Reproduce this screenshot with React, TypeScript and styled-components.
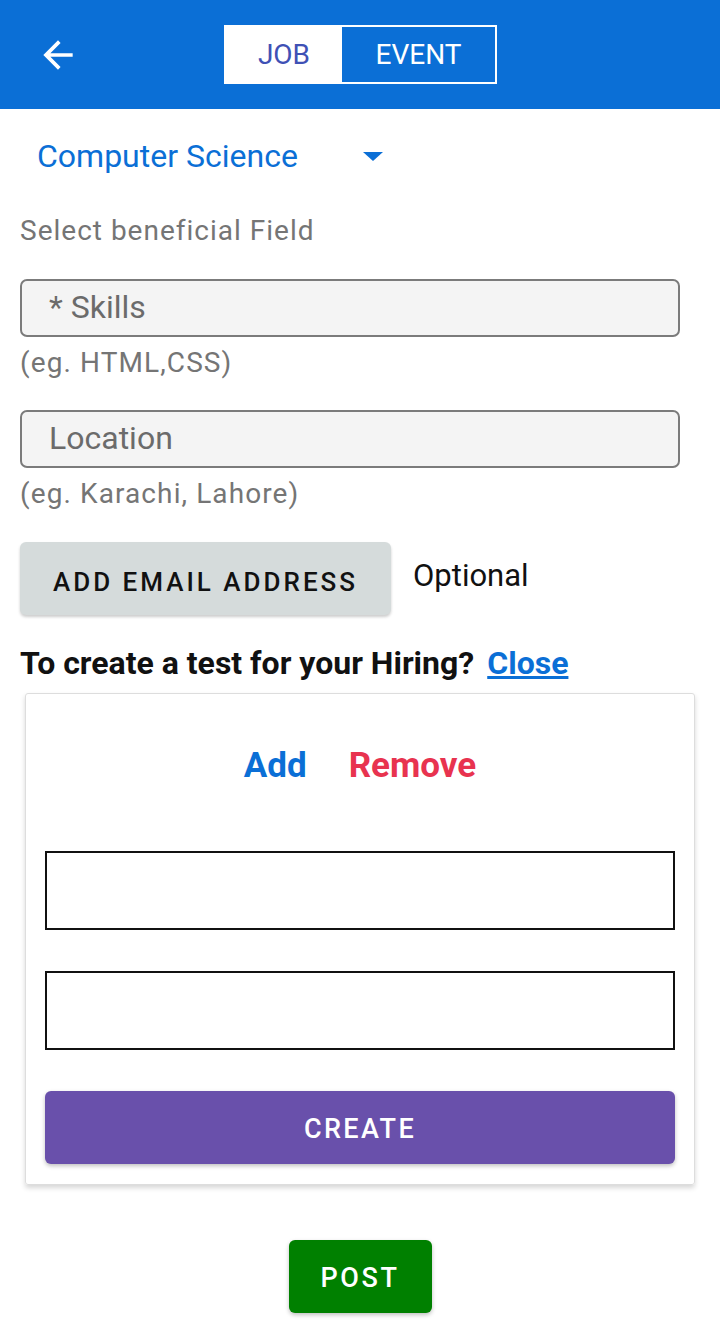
import React from "react";
import styled, { createGlobalStyle } from "styled-components";

const GlobalStyle = createGlobalStyle`
    body {
        margin: 0;
        background: #ffffff;
        font-family: Roboto, "Noto Sans", sans-serif;
    }
`;

const Page = styled.div`
    width: 720px;
    min-height: 1331px;
    background: #ffffff;
`;

const Header = styled.header`
    height: 109px;
    background: #0b6fd6;
    display: flex;
    align-items: center;
`;

const BackButton = styled.button`
    width: 80px;
    height: 109px;
    padding: 0 0 0 36px;
    border: none;
    background: none;
    display: flex;
    align-items: center;
    cursor: pointer;
`;

const Toggle = styled.div`
    display: flex;
    margin-left: 144px;
    height: 59px;
    box-sizing: border-box;
    border: 2px solid #ffffff;
`;

const ToggleItem = styled.div<{ $active?: boolean; $width: number }>`
    width: ${p => p.$width}px;
    display: flex;
    align-items: center;
    justify-content: center;
    font-size: 28px;
    background: ${p => (p.$active ? "#ffffff" : "transparent")};
    color: ${p => (p.$active ? "#3f51b5" : "#ffffff")};
`;

const Body = styled.main`
    padding: 0 20px;
    display: flex;
    flex-direction: column;
`;

const Picker = styled.div`
    display: flex;
    align-items: center;
    height: 94px;
    padding-left: 17px;
    color: #0b6fd6;
    font-size: 32px;
`;

const Caret = styled.span`
    margin-left: 65px;
    width: 0;
    height: 0;
    border-left: 10px solid transparent;
    border-right: 10px solid transparent;
    border-top: 9px solid #0b6fd6;
`;

const Label = styled.div`
    color: #757575;
    font-size: 28px;
    line-height: 34px;
    letter-spacing: 1px;
    margin-top: 11px;
    margin-bottom: 31px;
`;

const Field = styled.div`
    width: 660px;
    height: 58px;
    box-sizing: border-box;
    border: 2px solid #7b7b7b;
    border-radius: 7px;
    background: #f4f4f4;
    display: flex;
    align-items: center;
    padding: 0 0 3px 27px;
    font-size: 32px;
    color: #6b6b6b;
`;

const Hint = styled.div<{ $gap: number }>`
    color: #757575;
    font-size: 28px;
    line-height: 34px;
    letter-spacing: 1.1px;
    margin-top: 9px;
    margin-bottom: ${p => p.$gap}px;
`;

const EmailRow = styled.div`
    display: flex;
    align-items: center;
    gap: 22px;
`;

const GreyButton = styled.button`
    width: 371px;
    height: 73px;
    border: none;
    border-radius: 6px;
    background: #d5dbdb;
    box-shadow: 0 2px 3px rgba(0, 0, 0, 0.2);
    font-family: Roboto, sans-serif;
    font-weight: 500;
    font-size: 26px;
    letter-spacing: 3px;
    color: #111111;
    text-transform: uppercase;
    padding: 6px 0 0;
`;

const Optional = styled.span`
    font-size: 31px;
    color: #111111;
    margin-top: -6px;
`;

const Question = styled.div`
    margin-top: 29px;
    font-size: 32px;
    line-height: 38px;
    font-weight: 700;
    color: #111111;
    display: flex;
    gap: 13px;
`;

const CloseLink = styled.a`
    color: #0b6fd6;
    text-decoration: underline;
    cursor: pointer;
`;

const Card = styled.section`
    margin: 11px 5px 0;
    width: 670px;
    box-sizing: border-box;
    border: 1px solid #dddddd;
    border-radius: 3px;
    box-shadow: 0 3px 5px rgba(0, 0, 0, 0.16);
    padding: 52px 19px 20px;
    display: flex;
    flex-direction: column;
`;

const Actions = styled.div`
    display: flex;
    justify-content: center;
    gap: 42px;
    font-size: 35px;
    line-height: 40px;
    font-weight: 700;
    margin-bottom: 65px;
`;

const Action = styled.span<{ $color: string }>`
    color: ${p => p.$color};
`;

const Box = styled.div`
    height: 79px;
    box-sizing: border-box;
    border: 2px solid #111111;
    margin-bottom: 41px;
`;

const CreateButton = styled.button`
    height: 73px;
    border: none;
    border-radius: 6px;
    background: #6950ab;
    color: #ffffff;
    box-shadow: 0 2px 4px rgba(0, 0, 0, 0.25);
    font-family: Roboto, sans-serif;
    font-weight: 500;
    font-size: 27px;
    letter-spacing: 2.4px;
    padding-top: 4px;
`;

const Footer = styled.div`
    display: flex;
    justify-content: center;
    padding: 55px 0 18px;
`;

const PostButton = styled.button`
    width: 143px;
    height: 73px;
    border: none;
    border-radius: 6px;
    background: #008000;
    color: #ffffff;
    box-shadow: 0 2px 4px rgba(0, 0, 0, 0.25);
    font-family: Roboto, sans-serif;
    font-weight: 500;
    font-size: 27px;
    letter-spacing: 2.6px;
    padding-top: 4px;
`;

function BackArrow() {
    return (
        <svg width="48" height="48" viewBox="0 0 24 24" fill="#ffffff">
            <path d="M20 11H7.83l5.59-5.59L12 4l-8 8 8 8 1.41-1.41L7.83 13H20v-2z" />
        </svg>
    );
}

export default function App() {
    return (
        <Page>
            <GlobalStyle />
            <Header>
                <BackButton aria-label="back">
                    <BackArrow />
                </BackButton>
                <Toggle>
                    <ToggleItem $active $width={116}>JOB</ToggleItem>
                    <ToggleItem $width={153}>EVENT</ToggleItem>
                </Toggle>
            </Header>
            <Body>
                <Picker>
                    Computer Science
                    <Caret />
                </Picker>
                <Label>Select beneficial Field</Label>
                <Field>* Skills</Field>
                <Hint $gap={30}>(eg. HTML,CSS)</Hint>
                <Field>Location</Field>
                <Hint $gap={31}>(eg. Karachi, Lahore)</Hint>
                <EmailRow>
                    <GreyButton>Add email address</GreyButton>
                    <Optional>Optional</Optional>
                </EmailRow>
                <Question>
                    <span>To create a test for your Hiring?</span>
                    <CloseLink>Close</CloseLink>
                </Question>
                <Card>
                    <Actions>
                        <Action $color="#0b6fd6">Add</Action>
                        <Action $color="#e8334f">Remove</Action>
                    </Actions>
                    <Box />
                    <Box />
                    <CreateButton>CREATE</CreateButton>
                </Card>
                <Footer>
                    <PostButton>POST</PostButton>
                </Footer>
            </Body>
        </Page>
    );
}
